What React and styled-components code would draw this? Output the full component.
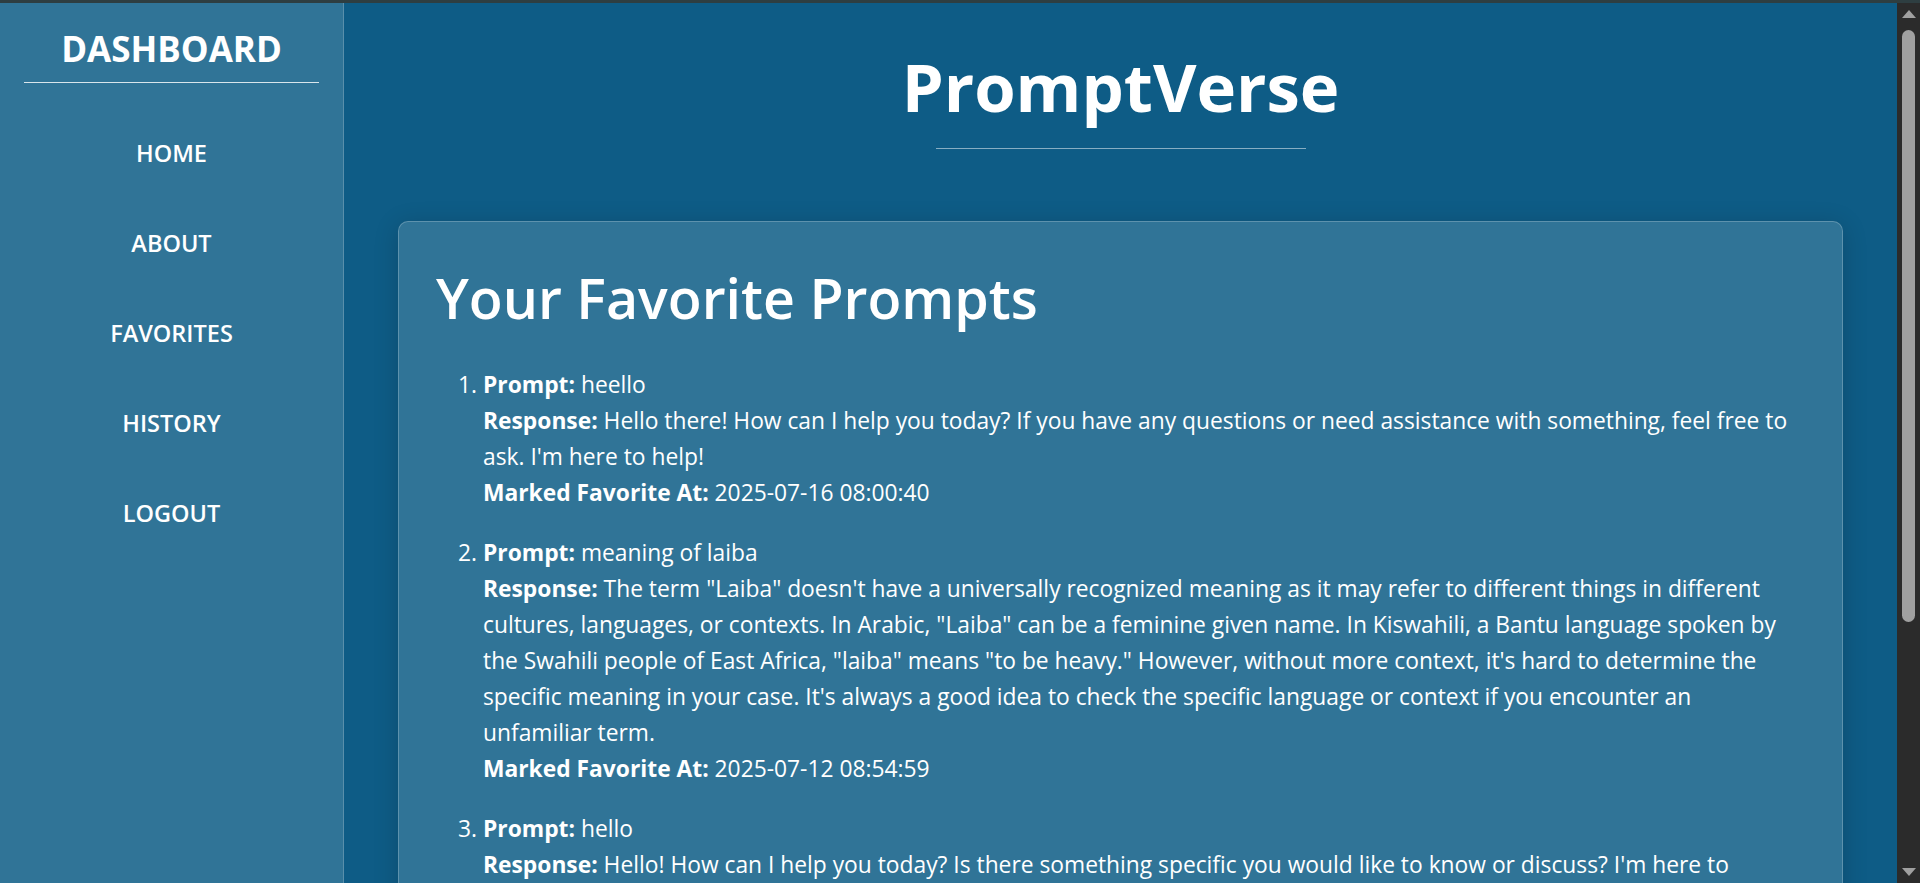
import React from "react";
import styled, { createGlobalStyle } from "styled-components";

const GlobalStyle = createGlobalStyle`
  html, body {
    margin: 0;
    padding: 0;
    height: 100%;
    overflow: hidden;
  }
  body {
    font-family: "Open Sans", "Noto Sans", sans-serif;
    color: #ffffff;
    background: #0e5c86;
  }
  #root {
    height: 100%;
  }
`;

const Page = styled.div`
  display: flex;
  flex-direction: column;
  height: 100vh;
`;

const WindowEdge = styled.div`
  flex: 0 0 3px;
  background: #2e3e41;
`;

const Shell = styled.div`
  flex: 1;
  display: flex;
  min-height: 0;
`;

const Sidebar = styled.aside`
  flex: 0 0 344px;
  box-sizing: border-box;
  background: #307497;
  border-right: 1px solid rgba(255, 255, 255, 0.2);
  padding: 22px 24px 0;
  display: flex;
  flex-direction: column;
`;

const Brand = styled.div`
  font-size: 35px;
  font-weight: 700;
  line-height: 48px;
  text-align: center;
`;

const BrandRule = styled.div`
  height: 1px;
  margin-top: 9px;
  background: rgba(255, 255, 255, 0.82);
`;

const Nav = styled.nav`
  display: flex;
  flex-direction: column;
  margin-top: 25px;
`;

const NavLink = styled.a`
  display: block;
  padding: 29px 0;
  font-size: 23.5px;
  font-weight: 600;
  line-height: 32px;
  text-align: center;
  color: #ffffff;
  text-decoration: none;
  cursor: pointer;
`;

const Main = styled.main`
  flex: 1;
  min-width: 0;
  overflow: hidden;
  box-sizing: border-box;
  padding: 38px 54px 40px;
  background: #0e5c86;
`;

const ScrollRail = styled.div`
  flex: 0 0 23px;
  display: flex;
  flex-direction: column;
  align-items: center;
  background: #2b2b2b;
`;

const ArrowButton = styled.div`
  flex: 0 0 22px;
  display: flex;
  align-items: center;
  justify-content: center;
  color: #a0a0a0;
`;

const Track = styled.div`
  flex: 1;
  width: 13px;
  padding-top: 5px;
`;

const Thumb = styled.div`
  height: 592px;
  border-radius: 7px;
  background: #a0a0a0;
`;

const Header = styled.header`
  display: flex;
  flex-direction: column;
  align-items: center;
`;

const Title = styled.h1`
  margin: 0;
  font-size: 67px;
  font-weight: 700;
  line-height: 90px;
`;

const TitleRule = styled.div`
  width: 370px;
  height: 1px;
  margin-top: 17px;
  background: rgba(255, 255, 255, 0.5);
`;

const Card = styled.section`
  margin-top: 72px;
  background: #307497;
  border: 1px solid rgba(255, 255, 255, 0.22);
  border-radius: 10px;
  box-shadow: 0 4px 24px rgba(0, 0, 0, 0.18);
  padding: 42px 37px 40px;
`;

const CardTitle = styled.h2`
  margin: 0 0 35px;
  font-size: 55.5px;
  font-weight: 600;
  line-height: 68px;
`;

const List = styled.ol`
  margin: 0;
  padding: 0 6px 0 47px;
  font-size: 22.8px;
  line-height: 36px;
`;

const Item = styled.li`
  margin-bottom: 24px;
  &:last-child {
    margin-bottom: 0;
  }
`;

const Line = styled.div``;

const Label = styled.strong`
  font-weight: 700;
`;

const favorites = [
  {
    prompt: "heello",
    response:
      "Hello there! How can I help you today? If you have any questions or need assistance with something, feel free to ask. I'm here to help!",
    at: "2025-07-16 08:00:40",
  },
  {
    prompt: "meaning of laiba",
    response:
      "The term \"Laiba\" doesn't have a universally recognized meaning as it may refer to different things in different cultures, languages, or contexts. In Arabic, \"Laiba\" can be a feminine given name. In Kiswahili, a Bantu language spoken by the Swahili people of East Africa, \"laiba\" means \"to be heavy.\" However, without more context, it's hard to determine the specific meaning in your case. It's always a good idea to check the specific language or context if you encounter an unfamiliar term.",
    at: "2025-07-12 08:54:59",
  },
  {
    prompt: "hello",
    response:
      "Hello! How can I help you today? Is there something specific you would like to know or discuss? I'm here to provide assistance.",
    at: "2025-07-12 08:50:21",
  },
  {
    prompt: "hi",
    response: "Hi there! How can I assist you today?",
    at: "2025-07-11 19:32:07",
  },
];

const navItems = ["HOME", "ABOUT", "FAVORITES", "HISTORY", "LOGOUT"];

const UpArrow = () => (
  <svg width="14" height="8" viewBox="0 0 14 8">
    <polygon points="7,0 14,8 0,8" fill="currentColor" />
  </svg>
);

const DownArrow = () => (
  <svg width="14" height="8" viewBox="0 0 14 8">
    <polygon points="0,0 14,0 7,8" fill="currentColor" />
  </svg>
);

export default function App() {
  return (
    <Page>
      <GlobalStyle />
      <WindowEdge />
      <Shell>
        <Sidebar>
          <Brand>DASHBOARD</Brand>
          <BrandRule />
          <Nav>
            {navItems.map((n) => (
              <NavLink key={n}>{n}</NavLink>
            ))}
          </Nav>
        </Sidebar>
        <Main>
          <Header>
            <Title>PromptVerse</Title>
            <TitleRule />
          </Header>
          <Card>
            <CardTitle>Your Favorite Prompts</CardTitle>
            <List>
              {favorites.map((f, i) => (
                <Item key={i}>
                  <Line>
                    <Label>Prompt:</Label> {f.prompt}
                  </Line>
                  <Line>
                    <Label>Response:</Label> {f.response}
                  </Line>
                  <Line>
                    <Label>Marked Favorite At:</Label> {f.at}
                  </Line>
                </Item>
              ))}
            </List>
          </Card>
        </Main>
        <ScrollRail>
          <ArrowButton>
            <UpArrow />
          </ArrowButton>
          <Track>
            <Thumb />
          </Track>
          <ArrowButton>
            <DownArrow />
          </ArrowButton>
        </ScrollRail>
      </Shell>
    </Page>
  );
}
